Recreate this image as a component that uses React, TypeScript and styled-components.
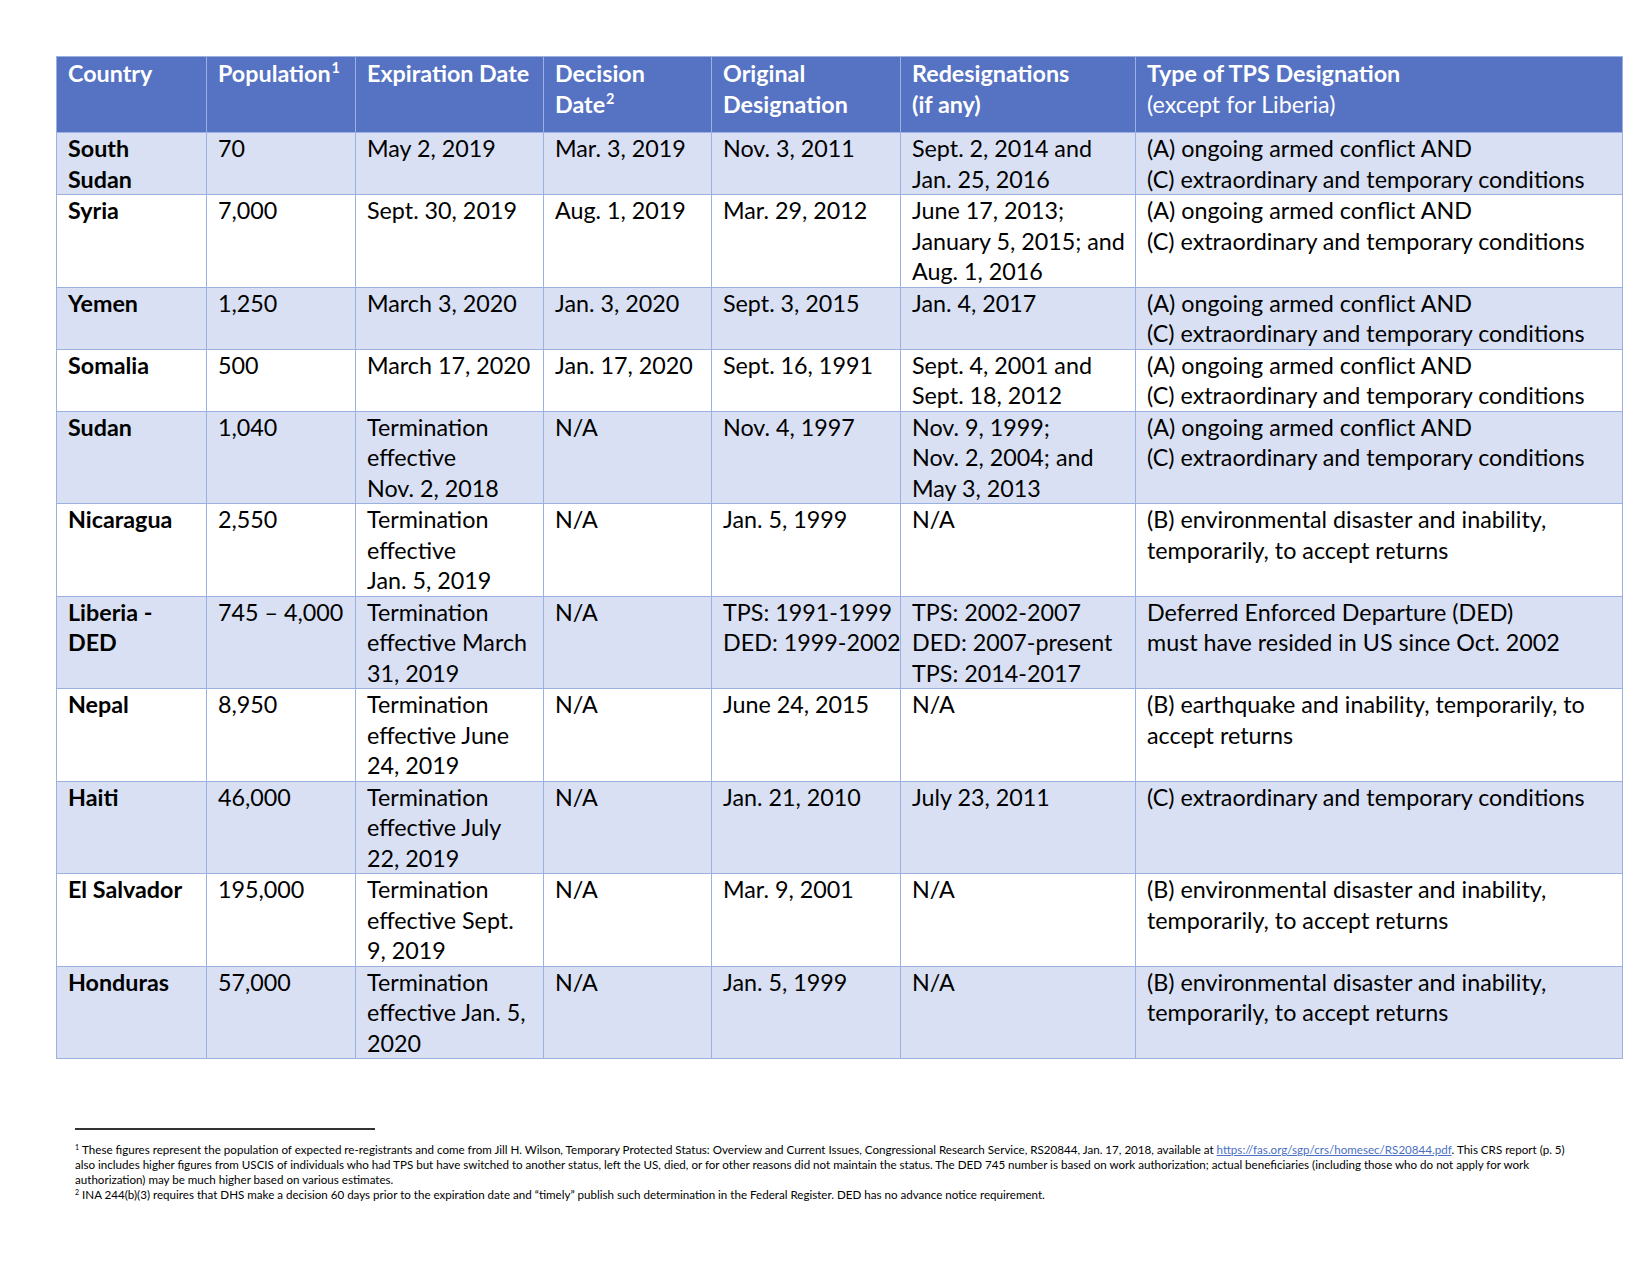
import React from 'react';
import styled, { createGlobalStyle } from 'styled-components';

const GlobalStyle = createGlobalStyle`
  html, body {
    margin: 0;
    padding: 0;
    background: #ffffff;
  }
  body {
    font-family: Lato, "Open Sans", "DejaVu Sans", sans-serif;
    color: #000000;
  }
`;

const Page = styled.div`
  width: 1650px;
  height: 1275px;
  padding: 56px 0 0 56px;
  box-sizing: border-box;
`;

const Table = styled.table`
  border-collapse: collapse;
  table-layout: fixed;
  width: 1566px;
  font-size: 23.3px;
  line-height: 30.5px;
`;

const HeadCell = styled.th`
  background: #5572c3;
  color: #ffffff;
  font-weight: 700;
  text-align: left;
  vertical-align: top;
  padding: 1px 11px 13px 11px;
  border: 1px solid #9db1e0;
  white-space: nowrap;
`;

const Light = styled.span`
  font-weight: 400;
`;

const Sup = styled.sup`
  font-size: 0.62em;
  line-height: 0;
  vertical-align: 0.6em;
  margin-left: 1px;
`;

const Row = styled.tr<{ $band: boolean }>`
  background: ${(p) => (p.$band ? '#d9e0f3' : '#ffffff')};
`;

const Cell = styled.td<{ $bold?: boolean }>`
  vertical-align: top;
  padding: 0 11px 0 11px;
  border: 1px solid #9db1e0;
  font-weight: ${(p) => (p.$bold ? 700 : 400)};
  white-space: nowrap;
  overflow: hidden;
`;

const Footnotes = styled.div`
  margin-top: 69px;
  margin-left: 19px;
`;

const Rule = styled.div`
  width: 300px;
  height: 2px;
  background: #333333;
  margin-bottom: 12px;
`;

const Note = styled.p`
  margin: 0;
  font-size: 11.6px;
  line-height: 15px;
  white-space: nowrap;
`;

const NoteMark = styled.sup`
  font-size: 7px;
  line-height: 0;
  vertical-align: 4px;
  margin-right: 3px;
`;

const Link = styled.span`
  color: #4a6fc4;
  text-decoration: underline;
`;

const colWidths = [150, 149, 188, 168, 189, 235, 487];

type RowData = {
  country: string[];
  population: string;
  expiration: string[];
  decision: string;
  original: string[];
  redesignations: string[];
  type: string[];
};

const AC = ['(A) ongoing armed conflict AND', '(C) extraordinary and temporary conditions'];
const ENV = ['(B) environmental disaster and inability,', 'temporarily, to accept returns'];

const rows: RowData[] = [
  { country: ['South', 'Sudan'], population: '70', expiration: ['May 2, 2019'], decision: 'Mar. 3, 2019', original: ['Nov. 3, 2011'], redesignations: ['Sept. 2, 2014 and', 'Jan. 25, 2016'], type: AC },
  { country: ['Syria'], population: '7,000', expiration: ['Sept. 30, 2019'], decision: 'Aug. 1, 2019', original: ['Mar. 29, 2012'], redesignations: ['June 17, 2013;', 'January 5, 2015; and', 'Aug. 1, 2016'], type: AC },
  { country: ['Yemen'], population: '1,250', expiration: ['March 3, 2020'], decision: 'Jan. 3, 2020', original: ['Sept. 3, 2015'], redesignations: ['Jan. 4, 2017'], type: AC },
  { country: ['Somalia'], population: '500', expiration: ['March 17, 2020'], decision: 'Jan. 17, 2020', original: ['Sept. 16, 1991'], redesignations: ['Sept. 4, 2001 and', 'Sept. 18, 2012'], type: AC },
  { country: ['Sudan'], population: '1,040', expiration: ['Termination', 'effective', 'Nov. 2, 2018'], decision: 'N/A', original: ['Nov. 4, 1997'], redesignations: ['Nov. 9, 1999;', 'Nov. 2, 2004; and', 'May 3, 2013'], type: AC },
  { country: ['Nicaragua'], population: '2,550', expiration: ['Termination', 'effective', 'Jan. 5, 2019'], decision: 'N/A', original: ['Jan. 5, 1999'], redesignations: ['N/A'], type: ENV },
  { country: ['Liberia -', 'DED'], population: '745 – 4,000', expiration: ['Termination', 'effective March', '31, 2019'], decision: 'N/A', original: ['TPS: 1991-1999', 'DED: 1999-2002'], redesignations: ['TPS: 2002-2007', 'DED: 2007-present', 'TPS: 2014-2017'], type: ['Deferred Enforced Departure (DED)', 'must have resided in US since Oct. 2002'] },
  { country: ['Nepal'], population: '8,950', expiration: ['Termination', 'effective June', '24, 2019'], decision: 'N/A', original: ['June 24, 2015'], redesignations: ['N/A'], type: ['(B) earthquake and inability, temporarily, to', 'accept returns'] },
  { country: ['Haiti'], population: '46,000', expiration: ['Termination', 'effective July', '22, 2019'], decision: 'N/A', original: ['Jan. 21, 2010'], redesignations: ['July 23, 2011'], type: ['(C) extraordinary and temporary conditions'] },
  { country: ['El Salvador'], population: '195,000', expiration: ['Termination', 'effective Sept.', '9, 2019'], decision: 'N/A', original: ['Mar. 9, 2001'], redesignations: ['N/A'], type: ENV },
  { country: ['Honduras'], population: '57,000', expiration: ['Termination', 'effective Jan. 5,', '2020'], decision: 'N/A', original: ['Jan. 5, 1999'], redesignations: ['N/A'], type: ENV },
];

const Lines: React.FC<{ lines: string[] }> = ({ lines }) => (
  <>
    {lines.map((l, i) => (
      <React.Fragment key={i}>
        {i > 0 && <br />}
        {l}
      </React.Fragment>
    ))}
  </>
);

const App: React.FC = () => {
  return (
    <Page>
      <GlobalStyle />
      <Table>
        <colgroup>
          {colWidths.map((w, i) => (
            <col key={i} style={{ width: w }} />
          ))}
        </colgroup>
        <thead>
          <tr>
            <HeadCell>Country</HeadCell>
            <HeadCell>
              Population<Sup>1</Sup>
            </HeadCell>
            <HeadCell>Expiration Date</HeadCell>
            <HeadCell>
              Decision
              <br />
              Date<Sup>2</Sup>
            </HeadCell>
            <HeadCell>
              Original
              <br />
              Designation
            </HeadCell>
            <HeadCell>
              Redesignations
              <br />
              (if any)
            </HeadCell>
            <HeadCell>
              Type of TPS Designation
              <br />
              <Light>(except for Liberia)</Light>
            </HeadCell>
          </tr>
        </thead>
        <tbody>
          {rows.map((r, i) => {
            const minLines = 2;
            const n = Math.max(minLines, r.country.length, r.expiration.length, r.original.length, r.redesignations.length, r.type.length);
            return (
              <Row key={r.country.join(' ')} $band={i % 2 === 0} style={{ height: n * 30.5 + 1 }}>
                <Cell $bold>
                  <Lines lines={r.country} />
                </Cell>
                <Cell>{r.population}</Cell>
                <Cell>
                  <Lines lines={r.expiration} />
                </Cell>
                <Cell>{r.decision}</Cell>
                <Cell>
                  <Lines lines={r.original} />
                </Cell>
                <Cell>
                  <Lines lines={r.redesignations} />
                </Cell>
                <Cell>
                  <Lines lines={r.type} />
                </Cell>
              </Row>
            );
          })}
        </tbody>
      </Table>
      <Footnotes>
        <Rule />
        <Note>
          <NoteMark>1</NoteMark>These figures represent the population of expected re-registrants and come from Jill H. Wilson, Temporary Protected Status: Overview and Current Issues, Congressional Research Service, RS20844, Jan. 17, 2018, available at{' '}
          <Link>https://fas.org/sgp/crs/homesec/RS20844.pdf</Link>. This CRS report (p. 5)
        </Note>
        <Note>
          also includes higher figures from USCIS of individuals who had TPS but have switched to another status, left the US, died, or for other reasons did not maintain the status. The DED 745 number is based on work authorization; actual beneficiaries (including those who do not apply for work
        </Note>
        <Note>authorization) may be much higher based on various estimates.</Note>
        <Note>
          <NoteMark>2</NoteMark>INA 244(b)(3) requires that DHS make a decision 60 days prior to the expiration date and “timely” publish such determination in the Federal Register. DED has no advance notice requirement.
        </Note>
      </Footnotes>
    </Page>
  );
};

export default App;
